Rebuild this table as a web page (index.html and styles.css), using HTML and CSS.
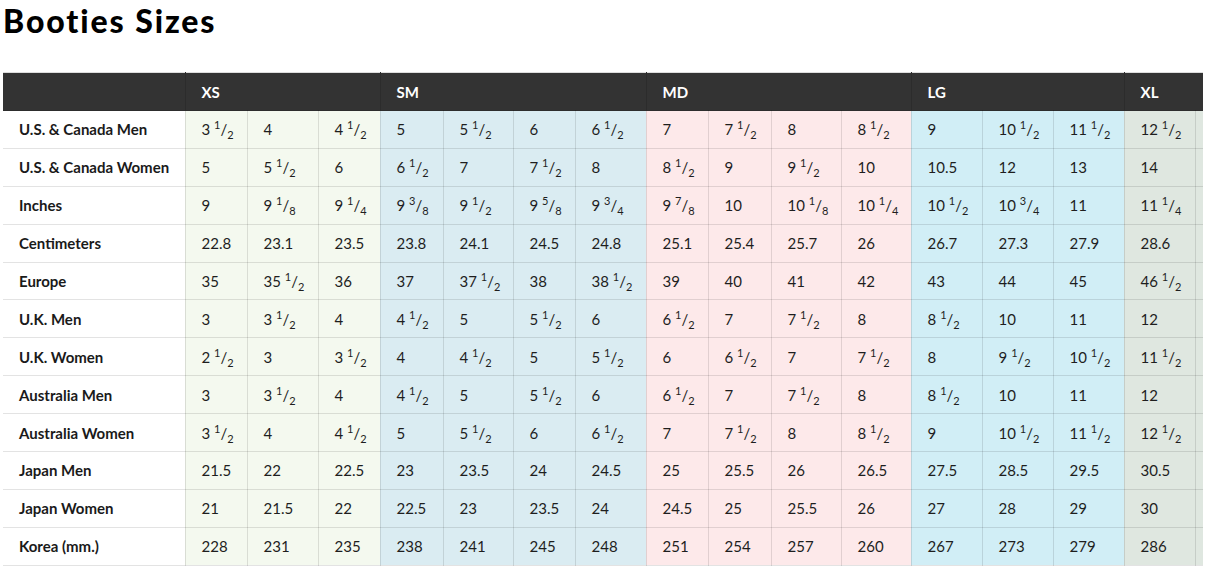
FILE: index.html
```html
<!DOCTYPE html>
<html lang="en">
<head>
<meta charset="utf-8">
<title>Booties Sizes</title>
<link rel="stylesheet" href="styles.css">
</head>
<body>
<div class="page">
  <h1 class="title">Booties Sizes</h1>
  <div class="table-wrap">
    <table class="sizes">
      <colgroup><col class="w182"></colgroup>
      <colgroup class="g-xs"><col class="w62"><col class="w71"><col class="w62"></colgroup>
      <colgroup class="g-sm"><col class="w63"><col class="w70"><col class="w62"><col class="w71"></colgroup>
      <colgroup class="g-md"><col class="w62"><col class="w63"><col class="w70"><col class="w70"></colgroup>
      <colgroup class="g-lg"><col class="w71"><col class="w71"><col class="w71"></colgroup>
      <colgroup class="g-xl"><col class="w71"><col class="w71"></colgroup>
      <thead>
        <tr>
          <th></th>
          <th colspan="3">XS</th>
          <th colspan="4">SM</th>
          <th colspan="4">MD</th>
          <th colspan="3">LG</th>
          <th colspan="2">XL</th>
        </tr>
      </thead>
      <tbody>
        <tr><th>U.S. &amp; Canada Men</th>
          <td>3 <span class="fr"><sup>1</sup>/<sub>2</sub></span></td><td>4</td><td>4 <span class="fr"><sup>1</sup>/<sub>2</sub></span></td>
          <td>5</td><td>5 <span class="fr"><sup>1</sup>/<sub>2</sub></span></td><td>6</td><td>6 <span class="fr"><sup>1</sup>/<sub>2</sub></span></td>
          <td>7</td><td>7 <span class="fr"><sup>1</sup>/<sub>2</sub></span></td><td>8</td><td>8 <span class="fr"><sup>1</sup>/<sub>2</sub></span></td>
          <td>9</td><td>10 <span class="fr"><sup>1</sup>/<sub>2</sub></span></td><td>11 <span class="fr"><sup>1</sup>/<sub>2</sub></span></td>
          <td>12 <span class="fr"><sup>1</sup>/<sub>2</sub></span></td><td></td></tr>
        <tr><th>U.S. &amp; Canada Women</th>
          <td>5</td><td>5 <span class="fr"><sup>1</sup>/<sub>2</sub></span></td><td>6</td>
          <td>6 <span class="fr"><sup>1</sup>/<sub>2</sub></span></td><td>7</td><td>7 <span class="fr"><sup>1</sup>/<sub>2</sub></span></td><td>8</td>
          <td>8 <span class="fr"><sup>1</sup>/<sub>2</sub></span></td><td>9</td><td>9 <span class="fr"><sup>1</sup>/<sub>2</sub></span></td><td>10</td>
          <td>10.5</td><td>12</td><td>13</td>
          <td>14</td><td></td></tr>
        <tr><th>Inches</th>
          <td>9</td><td>9 <span class="fr"><sup>1</sup>/<sub>8</sub></span></td><td>9 <span class="fr"><sup>1</sup>/<sub>4</sub></span></td>
          <td>9 <span class="fr"><sup>3</sup>/<sub>8</sub></span></td><td>9 <span class="fr"><sup>1</sup>/<sub>2</sub></span></td><td>9 <span class="fr"><sup>5</sup>/<sub>8</sub></span></td><td>9 <span class="fr"><sup>3</sup>/<sub>4</sub></span></td>
          <td>9 <span class="fr"><sup>7</sup>/<sub>8</sub></span></td><td>10</td><td>10 <span class="fr"><sup>1</sup>/<sub>8</sub></span></td><td>10 <span class="fr"><sup>1</sup>/<sub>4</sub></span></td>
          <td>10 <span class="fr"><sup>1</sup>/<sub>2</sub></span></td><td>10 <span class="fr"><sup>3</sup>/<sub>4</sub></span></td><td>11</td>
          <td>11 <span class="fr"><sup>1</sup>/<sub>4</sub></span></td><td></td></tr>
        <tr><th>Centimeters</th>
          <td>22.8</td><td>23.1</td><td>23.5</td>
          <td>23.8</td><td>24.1</td><td>24.5</td><td>24.8</td>
          <td>25.1</td><td>25.4</td><td>25.7</td><td>26</td>
          <td>26.7</td><td>27.3</td><td>27.9</td>
          <td>28.6</td><td></td></tr>
        <tr><th>Europe</th>
          <td>35</td><td>35 <span class="fr"><sup>1</sup>/<sub>2</sub></span></td><td>36</td>
          <td>37</td><td>37 <span class="fr"><sup>1</sup>/<sub>2</sub></span></td><td>38</td><td>38 <span class="fr"><sup>1</sup>/<sub>2</sub></span></td>
          <td>39</td><td>40</td><td>41</td><td>42</td>
          <td>43</td><td>44</td><td>45</td>
          <td>46 <span class="fr"><sup>1</sup>/<sub>2</sub></span></td><td></td></tr>
        <tr><th>U.K. Men</th>
          <td>3</td><td>3 <span class="fr"><sup>1</sup>/<sub>2</sub></span></td><td>4</td>
          <td>4 <span class="fr"><sup>1</sup>/<sub>2</sub></span></td><td>5</td><td>5 <span class="fr"><sup>1</sup>/<sub>2</sub></span></td><td>6</td>
          <td>6 <span class="fr"><sup>1</sup>/<sub>2</sub></span></td><td>7</td><td>7 <span class="fr"><sup>1</sup>/<sub>2</sub></span></td><td>8</td>
          <td>8 <span class="fr"><sup>1</sup>/<sub>2</sub></span></td><td>10</td><td>11</td>
          <td>12</td><td></td></tr>
        <tr><th>U.K. Women</th>
          <td>2 <span class="fr"><sup>1</sup>/<sub>2</sub></span></td><td>3</td><td>3 <span class="fr"><sup>1</sup>/<sub>2</sub></span></td>
          <td>4</td><td>4 <span class="fr"><sup>1</sup>/<sub>2</sub></span></td><td>5</td><td>5 <span class="fr"><sup>1</sup>/<sub>2</sub></span></td>
          <td>6</td><td>6 <span class="fr"><sup>1</sup>/<sub>2</sub></span></td><td>7</td><td>7 <span class="fr"><sup>1</sup>/<sub>2</sub></span></td>
          <td>8</td><td>9 <span class="fr"><sup>1</sup>/<sub>2</sub></span></td><td>10 <span class="fr"><sup>1</sup>/<sub>2</sub></span></td>
          <td>11 <span class="fr"><sup>1</sup>/<sub>2</sub></span></td><td></td></tr>
        <tr><th>Australia Men</th>
          <td>3</td><td>3 <span class="fr"><sup>1</sup>/<sub>2</sub></span></td><td>4</td>
          <td>4 <span class="fr"><sup>1</sup>/<sub>2</sub></span></td><td>5</td><td>5 <span class="fr"><sup>1</sup>/<sub>2</sub></span></td><td>6</td>
          <td>6 <span class="fr"><sup>1</sup>/<sub>2</sub></span></td><td>7</td><td>7 <span class="fr"><sup>1</sup>/<sub>2</sub></span></td><td>8</td>
          <td>8 <span class="fr"><sup>1</sup>/<sub>2</sub></span></td><td>10</td><td>11</td>
          <td>12</td><td></td></tr>
        <tr><th>Australia Women</th>
          <td>3 <span class="fr"><sup>1</sup>/<sub>2</sub></span></td><td>4</td><td>4 <span class="fr"><sup>1</sup>/<sub>2</sub></span></td>
          <td>5</td><td>5 <span class="fr"><sup>1</sup>/<sub>2</sub></span></td><td>6</td><td>6 <span class="fr"><sup>1</sup>/<sub>2</sub></span></td>
          <td>7</td><td>7 <span class="fr"><sup>1</sup>/<sub>2</sub></span></td><td>8</td><td>8 <span class="fr"><sup>1</sup>/<sub>2</sub></span></td>
          <td>9</td><td>10 <span class="fr"><sup>1</sup>/<sub>2</sub></span></td><td>11 <span class="fr"><sup>1</sup>/<sub>2</sub></span></td>
          <td>12 <span class="fr"><sup>1</sup>/<sub>2</sub></span></td><td></td></tr>
        <tr><th>Japan Men</th>
          <td>21.5</td><td>22</td><td>22.5</td>
          <td>23</td><td>23.5</td><td>24</td><td>24.5</td>
          <td>25</td><td>25.5</td><td>26</td><td>26.5</td>
          <td>27.5</td><td>28.5</td><td>29.5</td>
          <td>30.5</td><td></td></tr>
        <tr><th>Japan Women</th>
          <td>21</td><td>21.5</td><td>22</td>
          <td>22.5</td><td>23</td><td>23.5</td><td>24</td>
          <td>24.5</td><td>25</td><td>25.5</td><td>26</td>
          <td>27</td><td>28</td><td>29</td>
          <td>30</td><td></td></tr>
        <tr><th>Korea (mm.)</th>
          <td>228</td><td>231</td><td>235</td>
          <td>238</td><td>241</td><td>245</td><td>248</td>
          <td>251</td><td>254</td><td>257</td><td>260</td>
          <td>267</td><td>273</td><td>279</td>
          <td>286</td><td></td></tr>
      </tbody>
    </table>
  </div>
</div>
</body>
</html>
```

FILE: styles.css
```css
html, body {
  margin: 0;
  padding: 0;
  background: #ffffff;
}

.page {
  padding: 1px 3px 0 3px;
  font-family: Lato, "Noto Sans", "Liberation Sans", sans-serif;
  color: #1e1e1e;
}

.title {
  margin: 0 0 31px 0;
  font-family: Lato, "Noto Sans", sans-serif;
  font-weight: 900;
  font-size: 32px;
  line-height: 40px;
  letter-spacing: 1.9px;
  font-variant-ligatures: none;
  color: #000000;
}

.table-wrap {
  width: 1200px;
  overflow: hidden;
}

.sizes {
  border-collapse: collapse;
  table-layout: fixed;
  width: 1263px;
  font-size: 15px;
  border-top: 1px solid #dddddd;
}

.w182 { width: 182px; }
.w62 { width: 62px; }
.w63 { width: 63px; }
.w70 { width: 70px; }
.w71 { width: 71px; }

.g-xs { background: #f4f9ef; }
.g-sm { background: #daecf2; }
.g-md { background: #fde9ea; }
.g-lg { background: #d1eef6; }
.g-xl { background: #dfe7e0; }

.sizes thead th {
  background: #333333;
  color: #ffffff;
  font-weight: 700;
  font-size: 15px;
  text-align: left;
  height: 37px;
  padding: 0 16px;
  border-left: 1px solid #2c2c2c;
}

.sizes thead th:first-child {
  border-left: none;
}

.sizes tbody th,
.sizes tbody td {
  height: 36.9px;
  padding: 0 16px;
  text-align: left;
  vertical-align: middle;
  white-space: nowrap;
  border: 1px solid rgba(0, 0, 0, 0.11);
  line-height: 20px;
}

.sizes tbody th {
  font-weight: 700;
  color: #1a1a1a;
  background: #ffffff;
  border-left: none;
}

.sizes tbody td {
  font-weight: 400;
  color: #1e1e1e;
}

.fr sup,
.fr sub {
  font-size: 11px;
  line-height: 0;
}
```
